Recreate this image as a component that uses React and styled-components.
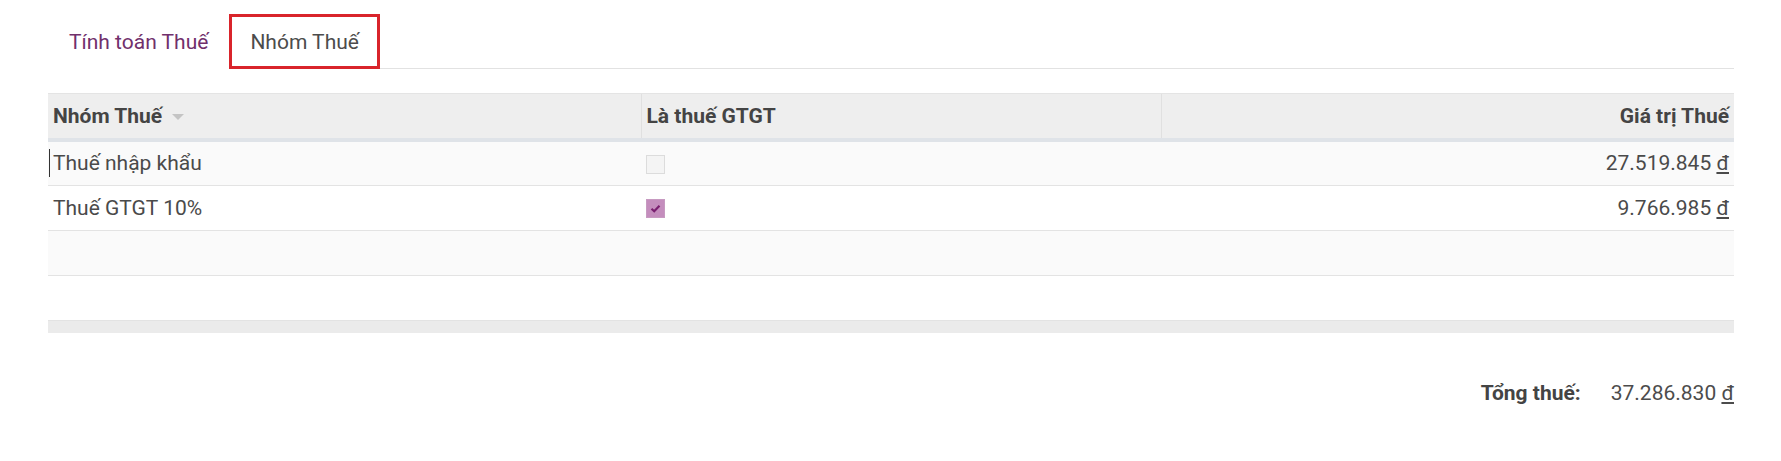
import React from 'react';
import styled, { createGlobalStyle } from 'styled-components';

const GlobalStyle = createGlobalStyle`
  body {
    margin: 0;
    background: #fff;
    font-family: Roboto, "Noto Sans", sans-serif;
    color: #4c4c4c;
  }
`

const Page = styled.div`
  padding: 14px 47px 0 48px;
`

const TabBar = styled.ul`
  display: flex;
  margin: 0;
  padding: 0;
  list-style: none;
  border-bottom: 1px solid #e2e2e2;
`

const Tab = styled.li`
  box-sizing: border-box;
  height: 55px;
  padding: 0 18px;
  display: flex;
  align-items: center;
  font-size: 21px;
  color: ${p => (p.active ? '#4c4c4c' : '#71306c')};
  border: 3px solid ${p => (p.active ? '#d9242b' : 'transparent')};
  margin-bottom: -1px;
  background: #fff;
`

const Table = styled.table`
  width: 100%;
  margin-top: 24px;
  border-collapse: collapse;
  font-size: 21px;
  table-layout: fixed;
`

const HeadCell = styled.th`
  height: 44px;
  padding: 0 5px 0 5px;
  background: #eeeeee;
  border-top: 1px solid #e4e4e4;
  border-bottom: 4px solid #dfe3e8;
  border-left: ${p => (p.first ? 'none' : '1px solid #e0e0e0')};
  text-align: ${p => p.align || 'left'};
  font-weight: 700;
  color: #444;
  white-space: nowrap;
`

const Caret = styled.span`
  display: inline-block;
  margin-left: 10px;
  vertical-align: middle;
  border-left: 6px solid transparent;
  border-right: 6px solid transparent;
  border-top: 6px solid #c4c4c4;
`

const Row = styled.tr`
  height: 45px;
  background: ${p => (p.odd ? '#fafafa' : '#fff')};
  border-bottom: 1px solid #e3e3e3;
`

const Cell = styled.td`
  padding: 0 5px 0 5px;
  text-align: ${p => p.align || 'left'};
  color: #4a4a4a;
  white-space: nowrap;
  position: relative;
`

const Cursor = styled.span`
  position: absolute;
  left: 1px;
  top: 7px;
  width: 1px;
  height: 28px;
  background: #333;
`

const Check = styled.span`
  display: inline-flex;
  align-items: center;
  justify-content: center;
  box-sizing: border-box;
  width: 19px;
  height: 19px;
  vertical-align: middle;
  border: 1px solid ${p => (p.checked ? '#c79ac1' : '#dcdcdc')};
  background: ${p => (p.checked ? '#c48dbd' : '#f4f4f4')};
`

const Money = styled.span`
  & u {
    text-decoration: underline;
    text-underline-offset: 2px;
  }
`

const FootRow = styled.tr`
  height: 13px;
  background: #ebebeb;
  border-top: 1px solid #dedede;
`

const Totals = styled.div`
  display: flex;
  justify-content: flex-end;
  align-items: center;
  gap: 30px;
  margin-top: 48px;
  padding-right: 0;
  font-size: 21px;
`

const TotalLabel = styled.span`
  font-weight: 700;
  color: #444;
`

const rows = [
  { name: 'Thuế nhập khẩu', vat: false, amount: '27.519.845' },
  { name: 'Thuế GTGT 10%', vat: true, amount: '9.766.985' },
]

const Amount = ({ value }) => (
  <Money>
    {value} <u>đ</u>
  </Money>
)

export default function App() {
  return (
    <Page>
      <GlobalStyle />
      <TabBar>
        <Tab>Tính toán Thuế</Tab>
        <Tab active>Nhóm Thuế</Tab>
      </TabBar>
      <Table>
        <colgroup>
          <col style={{ width: 593 }} />
          <col style={{ width: 520 }} />
          <col />
        </colgroup>
        <thead>
          <tr>
            <HeadCell first>
              Nhóm Thuế<Caret />
            </HeadCell>
            <HeadCell>Là thuế GTGT</HeadCell>
            <HeadCell align="right">Giá trị Thuế</HeadCell>
          </tr>
        </thead>
        <tbody>
          {rows.map((r, i) => (
            <Row key={r.name} odd={i % 2 === 0}>
              <Cell>
                {i === 0 && <Cursor />}
                {r.name}
              </Cell>
              <Cell>
                <Check checked={r.vat}>
                  {r.vat && (
                    <svg width="11" height="9" viewBox="0 0 11 9">
                      <path d="M1.5 4.8 L4.2 7.2 L9.5 1.8" fill="none" stroke="#7a1f70" strokeWidth="2.2" />
                    </svg>
                  )}
                </Check>
              </Cell>
              <Cell align="right">
                <Amount value={r.amount} />
              </Cell>
            </Row>
          ))}
          <Row odd>
            <Cell colSpan={3} />
          </Row>
          <Row>
            <Cell colSpan={3} />
          </Row>
        </tbody>
        <tfoot>
          <FootRow>
            <td colSpan={3} />
          </FootRow>
        </tfoot>
      </Table>
      <Totals>
        <TotalLabel>Tổng thuế:</TotalLabel>
        <Amount value="37.286.830" />
      </Totals>
    </Page>
  );
}
